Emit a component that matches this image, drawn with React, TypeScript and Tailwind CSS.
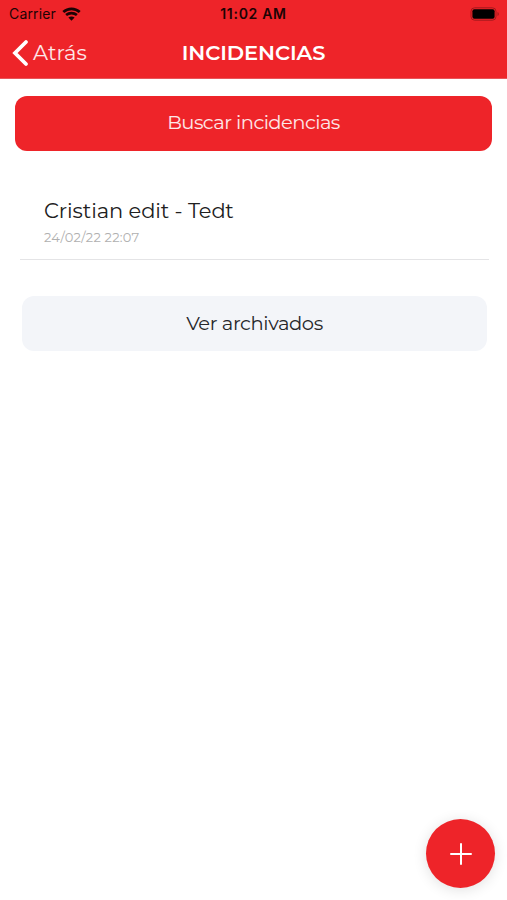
function WifiIcon() {
  return (
    <svg className="block h-[14px] w-[19px]" viewBox="0 0 19 14" fill="none" stroke="#1c0304">
      <path d="M1.3 5C6 .7 13 .7 17.7 5" strokeWidth="2.8" />
      <path d="M4.1 8.1C7.2 5.4 11.8 5.4 14.9 8.1" strokeWidth="2.6" />
      <path d="M6.4 10.6C8.2 9 10.8 9 12.6 10.6L9.5 13.7Z" fill="#1c0304" stroke="none" />
    </svg>
  );
}

function BatteryIcon() {
  return (
    <svg className="block h-[14px] w-[30px]" viewBox="0 0 30 14">
      <rect x="1" y="0.8" width="25" height="12.4" rx="3.6" fill="none" stroke="#a3191d" strokeWidth="1" />
      <rect x="2.4" y="2.2" width="22.2" height="9.6" rx="2" fill="#000" />
      <path d="M27.5 5v4c1.8-.6 1.8-3.4 0-4Z" fill="#a3191d" />
    </svg>
  );
}

export default function App() {
  return (
    <div className="flex h-[900px] w-full flex-col bg-white font-['Montserrat','Inter',sans-serif]">
      <header className="h-[79px] border-b border-[#e8555a] bg-[#ee2429]">
        <div className="grid h-[27px] grid-cols-3 items-center font-['Inter',sans-serif] text-[14px] leading-none text-[#1c0304]">
          <div className="flex items-center gap-[6px] pl-[9px]">
            <span className="tracking-[0.15px]">Carrier</span>
            <WifiIcon />
          </div>
          <span className="text-center font-semibold tracking-[0.7px]">11:02 AM</span>
          <div className="flex justify-end pr-[7px]">
            <BatteryIcon />
          </div>
        </div>
        <div className="grid h-[51px] grid-cols-[1fr_auto_1fr] items-center text-white">
          <button className="flex items-center gap-[4px] pl-[12px] text-[21px]">
            <svg className="block h-[28px] w-[17px]" viewBox="0 0 17 28" fill="none" stroke="white" strokeWidth="3.8">
              <path d="M14 3L3 14L14 25" strokeLinecap="round" strokeLinejoin="miter" />
            </svg>
            <span className="text-white/90">Atrás</span>
          </button>
          <h1 className="text-[21px] font-semibold tracking-[-0.08px]">INCIDENCIAS</h1>
          <span />
        </div>
      </header>
      <main className="flex flex-1 flex-col">
        <button className="mx-[15px] mt-[17px] h-[55px] rounded-[12px] bg-[#ee2429] pb-[2px] text-[19.5px] tracking-[-0.55px] text-white/90">
          Buscar incidencias
        </button>
        <section className="mr-[18px] ml-[20px] mt-[46px] h-[63px] border-b border-[#e4e4e6] pl-[24px]">
          <p className="text-[21px] leading-[28px] tracking-[-0.08px] text-[#202020]">Cristian edit - Tedt</p>
          <p className="mt-[4px] text-[13px] leading-[16px] tracking-[0.2px] text-[#b0b0b0]">24/02/22 22:07</p>
        </section>
        <button className="mr-[20px] ml-[22px] mt-[36px] h-[55px] rounded-[12px] bg-[#f3f5f9] text-[19.5px] tracking-[-0.4px] text-[#26272a]">
          Ver archivados
        </button>
        <button
          aria-label="Añadir"
          className="mt-auto mr-[12px] mb-[12px] flex size-[69px] items-center justify-center self-end rounded-full bg-[#ee2429] shadow-[0_2px_14px_rgba(0,0,0,0.12)]"
        >
          <svg className="size-[22px]" viewBox="0 0 22 22" fill="none" stroke="white" strokeWidth="2" strokeLinecap="round">
            <path d="M11 1v20M1 11h20" />
          </svg>
        </button>
      </main>
    </div>
  );
}
